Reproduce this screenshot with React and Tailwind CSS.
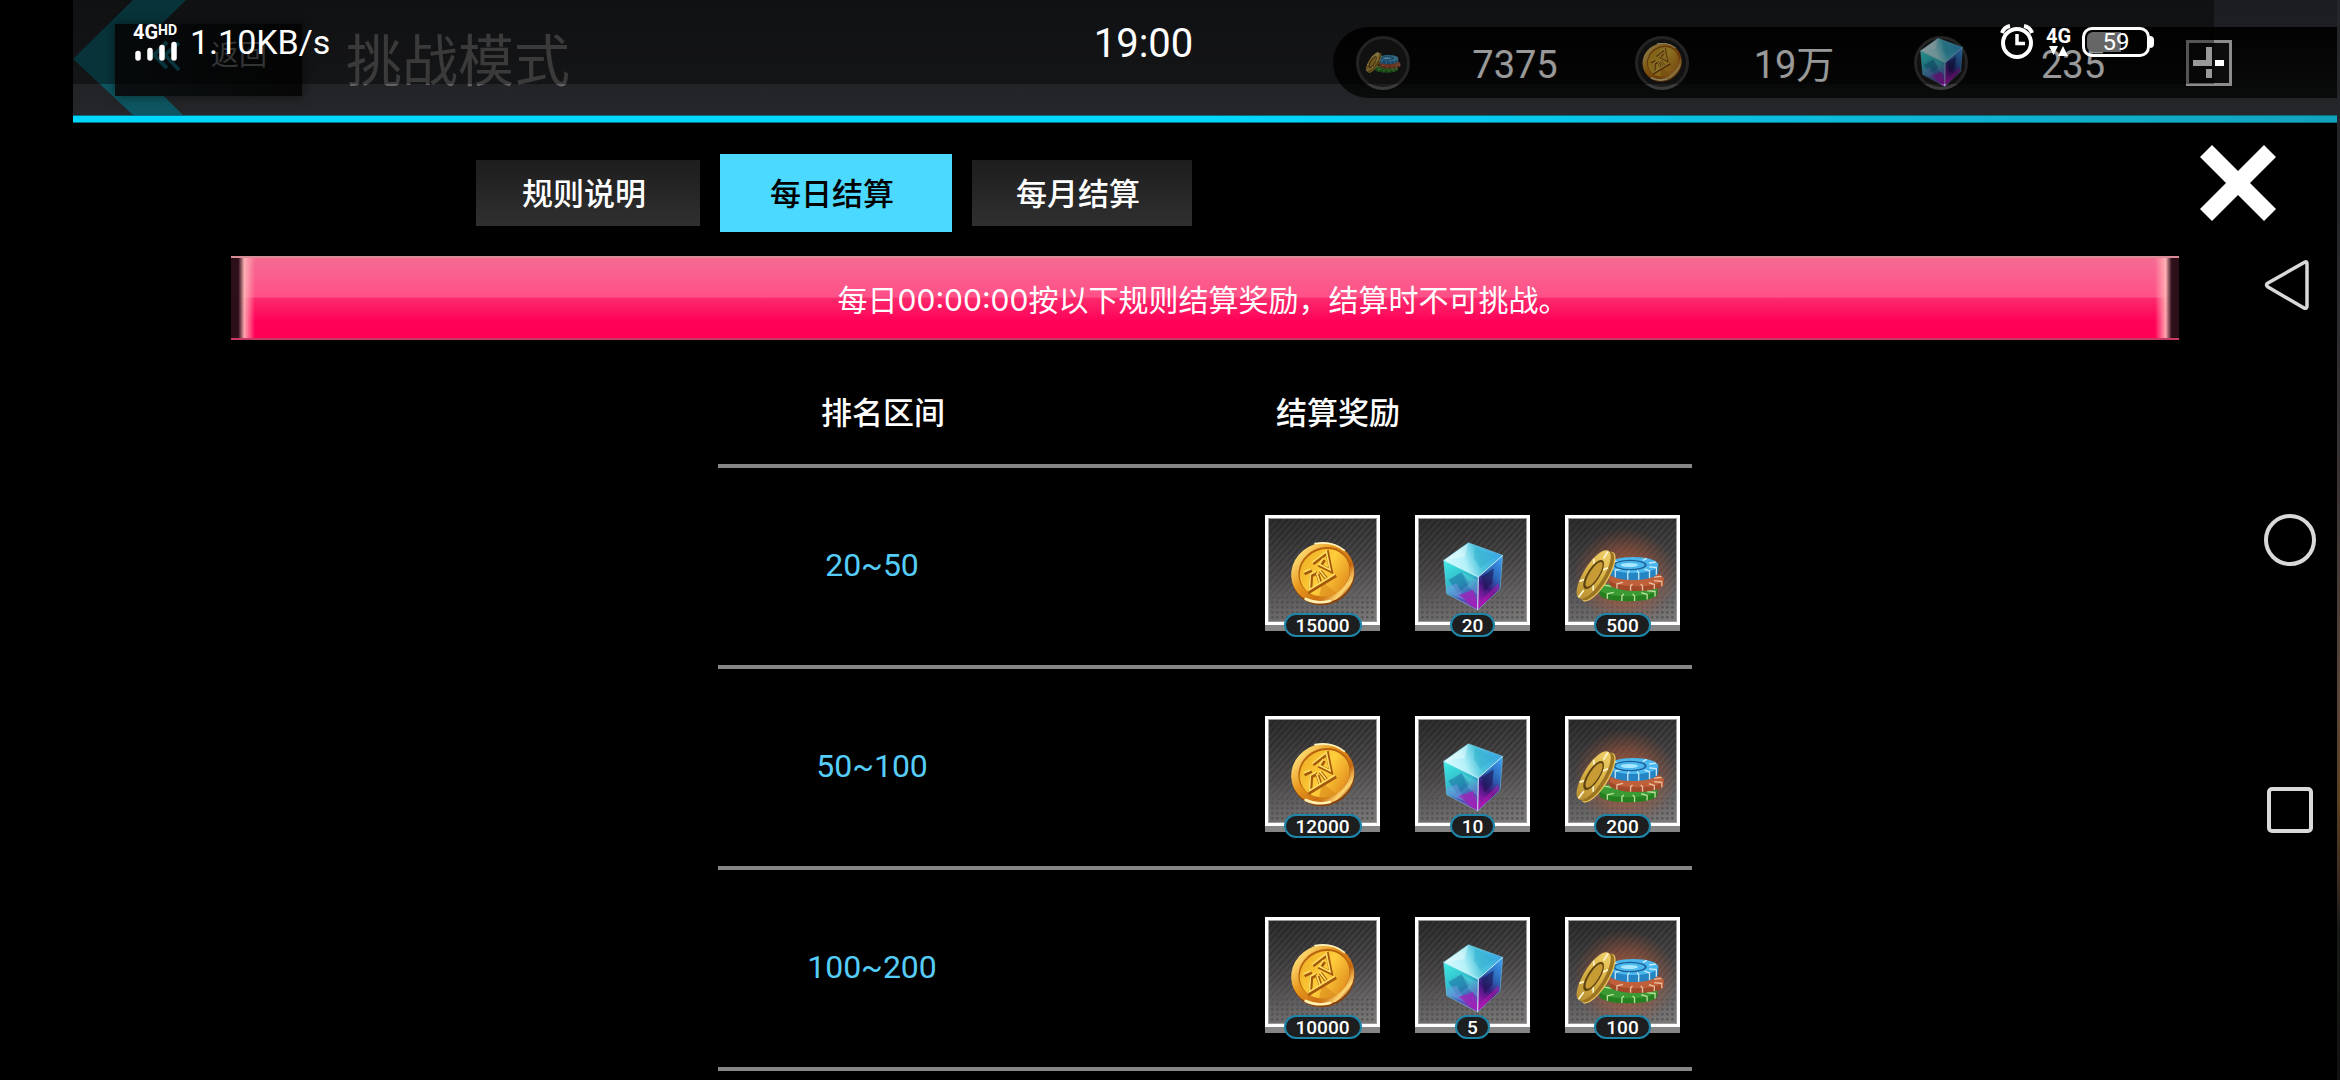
import React from "react";

function ArtDefs() {
  return (
    <svg className="absolute h-0 w-0" aria-hidden="true">
      <defs>
        <linearGradient id="coinRim" x1="0.3" y1="0" x2="0.7" y2="1">
          <stop offset="0" stopColor="#ffe07a" />
          <stop offset="0.35" stopColor="#e89a1e" />
          <stop offset="0.75" stopColor="#c86a10" />
          <stop offset="0.92" stopColor="#ffd873" />
          <stop offset="1" stopColor="#9a4a0c" />
        </linearGradient>
        <linearGradient id="coinFace" x1="0.2" y1="0" x2="0.8" y2="1">
          <stop offset="0" stopColor="#eeb024" />
          <stop offset="0.5" stopColor="#ffce3c" />
          <stop offset="1" stopColor="#e08a1c" />
        </linearGradient>
        <linearGradient id="cubeTop" x1="0" y1="0.6" x2="1" y2="0.4">
          <stop offset="0" stopColor="#d8fbff" />
          <stop offset="0.35" stopColor="#b4f1f8" />
          <stop offset="0.6" stopColor="#4cc4dc" />
          <stop offset="1" stopColor="#3aa2e6" />
        </linearGradient>
        <linearGradient id="cubeLeft" x1="0.2" y1="0" x2="0.6" y2="1">
          <stop offset="0" stopColor="#3fe6e0" />
          <stop offset="0.5" stopColor="#2fb4c8" />
          <stop offset="0.75" stopColor="#4a5cb8" />
          <stop offset="1" stopColor="#8a2cb8" />
        </linearGradient>
        <linearGradient id="cubeRight" x1="0.8" y1="0" x2="0.4" y2="1">
          <stop offset="0" stopColor="#3d9cf0" />
          <stop offset="0.4" stopColor="#2a62b4" />
          <stop offset="0.65" stopColor="#3c1a7c" />
          <stop offset="1" stopColor="#a818b4" />
        </linearGradient>
        <linearGradient id="goldChip" x1="0" y1="0" x2="1" y2="0">
          <stop offset="0" stopColor="#b89034" />
          <stop offset="0.5" stopColor="#d8b044" />
          <stop offset="1" stopColor="#f0d06a" />
        </linearGradient>
        <radialGradient id="chipGlow">
          <stop offset="0" stopColor="#d0663a" stopOpacity="0.8" />
          <stop offset="0.55" stopColor="#b0583a" stopOpacity="0.5" />
          <stop offset="1" stopColor="#a05030" stopOpacity="0" />
        </radialGradient>
        <linearGradient id="cardFill" x1="0.2" y1="0" x2="0.4" y2="1">
          <stop offset="0" stopColor="#2e2d2e" />
          <stop offset="0.5" stopColor="#4d4b4c" />
          <stop offset="1" stopColor="#7a7777" />
        </linearGradient>
        <linearGradient id="stripeFade" x1="0" y1="0" x2="0" y2="1">
          <stop offset="0" stopColor="#fff" />
          <stop offset="0.65" stopColor="#fff" stopOpacity="0.3" />
          <stop offset="0.8" stopColor="#fff" stopOpacity="0" />
        </linearGradient>
        <mask id="stripeMask">
          <rect width="345" height="348" fill="url(#stripeFade)" />
        </mask>
        <pattern id="stripes" width="14" height="14" patternUnits="userSpaceOnUse" patternTransform="rotate(42)">
          <rect width="6" height="14" fill="#1b1b1b" opacity="0.5" />
        </pattern>
        <pattern id="dots" width="15" height="15" patternUnits="userSpaceOnUse">
          <circle cx="7" cy="7" r="4" fill="#4c4a4a" opacity="0.75" />
        </pattern>
      </defs>
    </svg>
  );
}

function Coin() {
  return (
    <g>
      <ellipse cx="175" cy="180" rx="96" ry="89" transform="rotate(-28 175 180)" fill="#8a420c" />
      <ellipse cx="173" cy="174" rx="96" ry="89" transform="rotate(-28 173 174)" fill="url(#coinRim)" />
      <ellipse cx="178" cy="170" rx="80" ry="72" transform="rotate(-32 178 170)" fill="#b8630e" />
      <ellipse cx="179" cy="173" rx="77" ry="69" transform="rotate(-32 179 173)" fill="url(#coinFace)" />
      <path d="M160 255 L172 200 L215 235 Q190 252 160 255 Z" fill="#d88a1c" opacity="0.6" />
      <path d="M150 86 Q200 76 238 106" fill="none" stroke="#fff3c0" strokeWidth="5" strokeLinecap="round" />
      <path d="M122 252 Q155 268 195 258" fill="none" stroke="#fff0b0" strokeWidth="8" strokeLinecap="round" />
      <g fill="none" strokeLinejoin="miter">
        <g stroke="#a4580c" strokeWidth="11">
          <path d="M144 146 L187 113 L198 168 L166 152 L178 134" />
          <path d="M213 181 L136 228 L139 182 L156 173 M168 208 L158 178" />
          <path d="M118 176 L140 166" />
          <path d="M166 168 L186 194" />
        </g>
        <g stroke="#ffdf63" strokeWidth="5">
          <path d="M141 143 L184 110 L195 164 L163 148 L175 130" />
          <path d="M210 177 L133 224 L136 178 L153 169 M165 204 L155 174" />
          <path d="M115 172 L137 162" />
          <path d="M163 164 L183 190" />
        </g>
      </g>
    </g>
  );
}

function Cube() {
  return (
    <g>
      <path d="M160 83 L263 121 L190 186 L86 136 Z" fill="url(#cubeTop)" />
      <path d="M86 136 L190 186 L188 285 L95 236 Z" fill="url(#cubeLeft)" />
      <path d="M263 121 L190 186 L188 285 L255 223 Z" fill="url(#cubeRight)" />
      <path d="M160 83 L150 125 L86 136 Z" fill="#fff" opacity="0.35" />
      <path d="M180 96 L240 125 L196 160 L176 130 Z" fill="#2aa8c8" opacity="0.35" />
      <path d="M100 195 L140 172 L165 205 L128 235 Z" fill="#1a5a96" opacity="0.45" />
      <path d="M140 172 L188 196 L188 240 L160 215 Z" fill="#7ff0f0" opacity="0.25" />
      <path d="M96 215 L125 205 L150 255 L96 234 Z" fill="#7a9ae8" opacity="0.5" />
      <path d="M130 240 L175 225 L188 283 Z" fill="#a820b8" opacity="0.7" />
      <path d="M200 185 L236 160 L232 205 L208 230 Z" fill="#1a1450" opacity="0.6" />
      <path d="M205 250 L250 205 L253 222 L200 270 Z" fill="#c018b0" opacity="0.5" />
      <path d="M86 136 L190 186 L263 121 M190 186 L188 285" fill="none" stroke="#c8f8ff" strokeWidth="3" />
      <path d="M160 83 L263 121 L255 223 L188 285 L95 236 L86 136 Z" fill="none" stroke="#7fd8f0" strokeWidth="2" opacity="0.7" />
    </g>
  );
}

function FlatChip({ cx, cy, rx, ry, depth, top, side, mark }) {
  const at = (t, k) => [cx + rx * k * Math.cos(t), cy + ry * k * Math.sin(t)];
  const rim = [0.35, 0.85, 1.35, 1.8, 2.4];
  const back = [3.7, 5.3, 5.9];
  return (
    <g>
      <path
        d={`M${cx - rx} ${cy} V${cy + depth} A${rx} ${ry} 0 0 0 ${cx + rx} ${cy + depth} V${cy} Z`}
        fill={side}
      />
      <ellipse cx={cx} cy={cy} rx={rx} ry={ry} fill={top} />
      {rim.concat(back).map((t, i) => {
        const [x1, y1] = at(t, 0.68);
        const [x2, y2] = at(t, 0.98);
        return (
          <path
            key={i}
            d={i < rim.length ? `M${x1} ${y1} L${x2} ${y2} V${y2 + depth}` : `M${x1} ${y1} L${x2} ${y2}`}
            stroke={mark}
            strokeWidth="4"
            opacity="0.85"
            fill="none"
          />
        );
      })}
    </g>
  );
}

function Chips() {
  return (
    <g>
      <FlatChip cx={190} cy={222} rx={87} ry={22} depth={15} top="#3a9a34" side="#25801f" mark="#d4f0b0" />
      <FlatChip cx={215} cy={192} rx={82} ry={22} depth={14} top="#c0603a" side="#a04a2a" mark="#f4d0b0" />
      <FlatChip cx={205} cy={150} rx={75} ry={24} depth={21} top="#4ab8ee" side="#2484c4" mark="#e0f6ff" />
      <ellipse cx="195" cy="150" rx="50" ry="16" fill="#1d5f96" />
      <ellipse cx="195" cy="150" rx="44" ry="12" fill="#4ab8ee" />
      <ellipse cx="193" cy="150" rx="26" ry="6" fill="#a8e8ff" />
      <g transform="rotate(-58 92 180)">
        <ellipse cx="92" cy="189" rx="86" ry="30" fill="#e8c45c" />
        <ellipse cx="92" cy="186" rx="84" ry="29" fill="#9a7420" />
        <ellipse cx="90" cy="174" rx="84" ry="30" fill="url(#goldChip)" />
        <path
          d="M8 172 L34 174 M172 174 L146 174 M50 149 L62 158 M130 149 L118 158 M48 199 L62 190 M130 200 L116 190"
          stroke="#fff6d0"
          strokeWidth="5"
          fill="none"
        />
        <ellipse cx="90" cy="174" rx="50" ry="19" fill="#5c4210" />
        <ellipse cx="91" cy="175" rx="43" ry="14" fill="#c89c34" />
      </g>
    </g>
  );
}

const ART = { coin: Coin, cube: Cube, chips: Chips };

function RewardCard({ kind, amount }) {
  const Art = ART[kind];
  return (
    <div className="relative w-[115px] border-b-[6px] border-[#858585]">
      <div className="border-[3px] border-white">
        <svg viewBox="9 9 327 312" className="block w-full" aria-hidden="true">
          <rect width="345" height="348" fill="url(#cardFill)" />
          <rect width="345" height="348" fill="url(#stripes)" mask="url(#stripeMask)" />
          <rect y="245" width="345" height="100" fill="url(#dots)" />
          {kind === "chips" && <ellipse cx="180" cy="185" rx="155" ry="145" fill="url(#chipGlow)" />}
          <Art />
          <rect x="10" y="10" width="325" height="310" fill="none" stroke="#9a9a9a" strokeWidth="4" />
        </svg>
      </div>
      <div className="absolute inset-x-0 -bottom-3 flex justify-center">
        <span className="h-6 rounded-full border-2 border-[#1f86aa] bg-[#1c1e20] px-[10px] text-[19px] leading-[21px] font-medium text-white">
          {amount}
        </span>
      </div>
    </div>
  );
}

const ORB_BOX = {
  coin: { viewBox: "76 82 194 190", className: "w-10 brightness-90" },
  cube: { viewBox: "84 82 181 204", className: "w-[43px]" },
  chips: { viewBox: "28 95 272 172", className: "w-9 brightness-90" },
};

function Currency({ kind, value }) {
  const Art = ART[kind];
  const box = ORB_BOX[kind];
  return (
    <div className="flex items-center">
      <div className="flex h-[54px] w-[54px] items-center justify-center rounded-full border-[3px] border-[#3c3c3d] bg-[#1d1d1e]">
        <svg viewBox={box.viewBox} className={`shrink-0 ${box.className}`} aria-hidden="true">
          <Art />
        </svg>
      </div>
      <span className="w-[210px] pt-1 text-center text-[38px] leading-[54px] text-white">{value}</span>
    </div>
  );
}

function Header() {
  return (
    <header className="relative">
      <div className="relative flex h-[115px] items-start bg-linear-to-b from-[#1b1d21] to-[#252629]">
        <svg className="absolute top-0 left-0" width="130" height="115" viewBox="0 0 130 115" aria-hidden="true">
          <path d="M60 0 H113 L53 59 L110 115 H60 L0 59 Z" fill="#0e5661" />
        </svg>
        <button
          type="button"
          className="relative mt-6 ml-[42px] flex h-[72px] w-[187px] items-center bg-linear-to-r from-[#0a1012] to-[#070707] pb-2 pl-9 text-[28px] leading-8 text-[#565657] shadow-[0_0_10px_rgba(0,0,0,0.5)]"
        >
          <svg width="30" height="44" viewBox="0 0 30 44" className="mt-2" aria-hidden="true">
            <path d="M16 4 L3 17 L16 30 M28 5 L14 17 L28 32" fill="none" stroke="#0e5661" strokeWidth="4" />
          </svg>
          <span className="ml-[30px]">返回</span>
        </button>
        <h1 className="ml-[44px] text-[56px] leading-[124px] font-normal text-[#626263]">挑战模式</h1>
        <div className="mt-[27px] ml-auto flex h-[71px] w-[1004px] items-center rounded-l-full bg-linear-to-b from-[#030303] to-[#0a0b0b] pl-[23px]">
          <div className="flex gap-[15px]">
            <Currency kind="chips" value="7375" />
            <Currency kind="coin" value="19万" />
            <Currency kind="cube" value="235" />
          </div>
          <button type="button" aria-label="充值" className="ml-2">
            <svg width="46" height="46" viewBox="0 0 46 46" className="block" aria-hidden="true">
              <rect x="1.5" y="1.5" width="43" height="43" fill="#0c0c0c" stroke="#8c8c8c" strokeWidth="3" />
              <path d="M7 20 H20 V7 H26 V26 H7 Z M29 20 H38 V26 H29 Z M20 29 H26 V38 H20 Z" fill="#fff" />
            </svg>
          </button>
        </div>
      </div>
      <div className="h-2 border-y border-[#0a6f82] bg-linear-to-r from-[#00d8ff] from-50% to-[#12a3bd]" />
    </header>
  );
}

function StatusBar() {
  return (
    <div className="absolute top-0 right-[126px] left-[73px] grid h-[84px] grid-cols-[1fr_auto_1fr] items-center bg-black/40 px-[60px] text-white">
      <div className="flex items-center">
        <div className="w-[57px]">
          <div className="flex items-start text-[20px] leading-[18px] font-bold">
            4G<span className="text-[14px] leading-[14px]">HD</span>
          </div>
          <svg width="46" height="20" viewBox="0 0 46 20" className="block" aria-hidden="true">
            <path d="M5 12.500 V17 M17 9.500 V17 M29 6.500 V17 M41 3.500 V17" stroke="#fff" strokeWidth="5.500" strokeLinecap="round" />
          </svg>
        </div>
        <span className="text-[34px] leading-10">1.10KB/s</span>
      </div>
      <time className="pt-1 text-[40px] leading-10">19:00</time>
      <div className="flex items-center justify-end">
        <svg width="34" height="36" viewBox="0 0 34 36" fill="none" stroke="#fff" aria-hidden="true">
          <circle cx="17" cy="19" r="14" strokeWidth="4" />
          <path d="M17 10 V19.500 H25" strokeWidth="3.500" />
          <path d="M2 9 Q4 3 10 2 M32 9 Q30 3 24 2" strokeWidth="4" />
        </svg>
        <div className="ml-3 w-9">
          <div className="text-[20px] leading-[18px] font-bold">4G</div>
          <svg width="24" height="12" viewBox="0 0 24 12" className="block" aria-hidden="true">
            <path d="M3 1 H12 L7.500 10 Z M12 11 H22 L17 1 Z" fill="#fff" />
          </svg>
        </div>
        <div className="relative flex h-[30px] w-[68px] items-center rounded-[10px] border-[3px] border-white">
          <div className="ml-[2px] h-5 w-[34px] rounded-l-md bg-[#666]" />
          <span className="absolute inset-0 text-center text-[24px] leading-6">59</span>
        </div>
        <div className="h-3 w-1 rounded-r-full bg-white" />
      </div>
    </div>
  );
}

const TABS = [
  { label: "规则说明", className: "h-[66px] w-56 bg-linear-to-b from-[#1d1d1d] to-[#303030] text-white" },
  { label: "每日结算", className: "h-[78px] w-58 bg-[#4bd9ff] text-black", active: true },
  { label: "每月结算", className: "h-[66px] w-55 bg-linear-to-b from-[#1d1d1d] to-[#303030] text-white" },
];

function TabRow() {
  return (
    <div className="mt-[22px] flex items-start pr-[61px] pl-[403px]">
      <div role="tablist" className="mt-[9px] flex items-center gap-5">
        {TABS.map((tab) => (
          <button
            key={tab.label}
            type="button"
            role="tab"
            aria-selected={!!tab.active}
            className={`pt-1 pr-2 text-[31px] leading-9 font-medium ${tab.className}`}
          >
            {tab.label}
          </button>
        ))}
      </div>
      <button type="button" aria-label="关闭" className="ml-auto">
        <svg width="76" height="76" viewBox="0 0 76 76" className="block" aria-hidden="true">
          <path d="M12 0 L38 26 L64 0 L76 12 L50 38 L76 64 L64 76 L38 50 L12 76 L0 64 L26 38 L0 12 Z" fill="#fff" />
        </svg>
      </button>
    </div>
  );
}

function Banner() {
  return (
    <div className="mx-auto mt-6 flex h-[84px] w-[86%] items-stretch border-t-2 border-b-2 border-t-[#d98c98] border-b-[#c83a64] bg-linear-[180deg,#f56b92_0%,#ff5088_49%,#fb2a6c_50%,#ff0058_80%,#ff0055_100%]">
      <div className="w-6 bg-linear-to-r from-[#2c0f18] from-30% via-[#ffb8b8]/90 via-55% to-[#ffb8b8]/0" />
      <p className="flex flex-1 items-center justify-center pt-1 pr-1 font-[Inter,'Noto_Sans_CJK_SC',sans-serif] text-[30px] leading-10 text-white">
        每日00:00:00按以下规则结算奖励，结算时不可挑战。
      </p>
      <div className="w-6 bg-linear-to-l from-[#2c0f18] from-30% via-[#ffb8b8]/90 via-55% to-[#ffb8b8]/0" />
    </div>
  );
}

const ROWS = [
  { range: "20~50", coin: 15000, cube: 20, chips: 500 },
  { range: "50~100", coin: 12000, cube: 10, chips: 200 },
  { range: "100~200", coin: 10000, cube: 5, chips: 100 },
];

function RewardTable() {
  return (
    <table className="mx-auto mt-5 w-[974px] table-fixed border-separate border-spacing-0">
      <thead>
        <tr className="h-[108px] text-left text-[31px] leading-9 font-medium text-white">
          <th scope="col" className="w-[310px] border-b-4 border-[#868686] pt-1 pl-5 text-center font-medium">
            排名区间
          </th>
          <th scope="col" className="border-b-4 border-[#868686] pt-1 pl-[248px] font-medium">
            结算奖励
          </th>
        </tr>
      </thead>
      <tbody>
        {ROWS.map((row) => (
          <tr key={row.range} className="h-[201px]">
            <td className="border-b-4 border-[#868686] pr-[2px] pb-1 text-center text-[32px] leading-9 text-[#56cdf8]">{row.range}</td>
            <td className="border-b-4 border-[#868686] pt-[47px] pl-[237px] align-top">
              <div className="flex gap-[35px]">
                <RewardCard kind="coin" amount={row.coin} />
                <RewardCard kind="cube" amount={row.cube} />
                <RewardCard kind="chips" amount={row.chips} />
              </div>
            </td>
          </tr>
        ))}
      </tbody>
    </table>
  );
}

function SystemNav() {
  return (
    <nav className="absolute top-[259px] right-[24px] flex flex-col">
      <button type="button" aria-label="返回键">
        <svg width="52" height="52" viewBox="0 0 52 52" className="block" aria-hidden="true">
          <path d="M41 3 Q43 2 43 5 V47 Q43 50 40 49 L4 28 Q1 26 4 24 Z" fill="none" stroke="#d9d9d9" strokeWidth="3.500" strokeLinejoin="round" />
        </svg>
      </button>
      <button type="button" aria-label="主屏幕" className="mt-[203px]">
        <svg width="52" height="52" viewBox="0 0 52 52" className="block" aria-hidden="true">
          <circle cx="26" cy="26" r="24" fill="none" stroke="#d9d9d9" strokeWidth="4" />
        </svg>
      </button>
      <button type="button" aria-label="最近任务" className="mt-[218px]">
        <svg width="52" height="52" viewBox="0 0 52 52" className="block" aria-hidden="true">
          <rect x="5" y="5" width="42" height="42" rx="3" fill="none" stroke="#d9d9d9" strokeWidth="4" />
        </svg>
      </button>
    </nav>
  );
}

export default function App() {
  return (
    <div className="relative flex min-h-screen overflow-hidden bg-black font-[Roboto,'Noto_Sans_CJK_SC',sans-serif]">
      <ArtDefs />
      <div className="w-[73px] shrink-0" />
      <main className="min-w-0 flex-1">
        <Header />
        <TabRow />
        <Banner />
        <RewardTable />
      </main>
      <div className="w-[3px] shrink-0 bg-linear-[180deg,#24262a_0%,#24262a_20%,#3a3434_45%,#5a4638_65%,#5a4124_74%,#3a2a20_82%,#161a16_86%,#111_100%]" />
      <StatusBar />
      <SystemNav />
    </div>
  );
}
